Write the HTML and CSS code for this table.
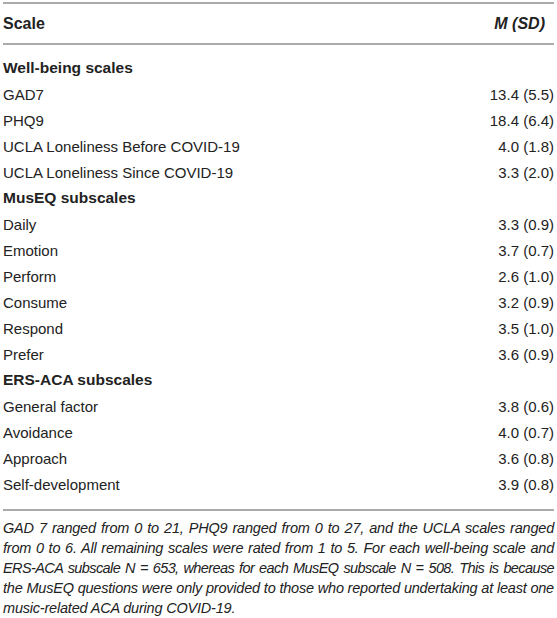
FILE: index.html
```html
<!DOCTYPE html>
<html lang="en">
<head>
<meta charset="utf-8">
<title>Table</title>
<link rel="stylesheet" href="styles.css">
</head>
<body>
<div class="wrap">
  <table class="tbl">
    <thead>
      <tr><th class="c-scale">Scale</th><th class="c-val"><i>M (SD)</i></th></tr>
    </thead>
    <tbody>
      <tr class="sec first"><td colspan="2">Well-being scales</td></tr>
      <tr><td>GAD7</td><td class="num">13.4 (5.5)</td></tr>
      <tr><td>PHQ9</td><td class="num">18.4 (6.4)</td></tr>
      <tr><td>UCLA Loneliness Before COVID-19</td><td class="num">4.0 (1.8)</td></tr>
      <tr><td>UCLA Loneliness Since COVID-19</td><td class="num">3.3 (2.0)</td></tr>
      <tr class="sec"><td colspan="2">MusEQ subscales</td></tr>
      <tr><td>Daily</td><td class="num">3.3 (0.9)</td></tr>
      <tr><td>Emotion</td><td class="num">3.7 (0.7)</td></tr>
      <tr><td>Perform</td><td class="num">2.6 (1.0)</td></tr>
      <tr><td>Consume</td><td class="num">3.2 (0.9)</td></tr>
      <tr><td>Respond</td><td class="num">3.5 (1.0)</td></tr>
      <tr><td>Prefer</td><td class="num">3.6 (0.9)</td></tr>
      <tr class="sec"><td colspan="2">ERS-ACA subscales</td></tr>
      <tr><td>General factor</td><td class="num">3.8 (0.6)</td></tr>
      <tr><td>Avoidance</td><td class="num">4.0 (0.7)</td></tr>
      <tr><td>Approach</td><td class="num">3.6 (0.8)</td></tr>
      <tr class="last"><td>Self-development</td><td class="num">3.9 (0.8)</td></tr>
    </tbody>
  </table>
  <p class="note"><span class="ln">GAD 7 ranged from 0 to 21, PHQ9 ranged from 0 to 27, and the UCLA scales ranged</span><span class="ln">from 0 to 6. All remaining scales were rated from 1 to 5. For each well-being scale and</span><span class="ln tight">ERS-ACA subscale N = 653, whereas for each MusEQ subscale N = 508. This is because</span><span class="ln">the MusEQ questions were only provided to those who reported undertaking at least one</span><span class="end">music-related ACA during COVID-19.</span></p>
</div>
</body>
</html>
```
FILE: styles.css
```css
html, body {
  margin: 0;
  padding: 0;
  background: #ffffff;
}
body {
  font-family: "Liberation Sans", Arial, sans-serif;
  color: #222222;
  font-size: 15px;
}
.wrap {
  padding: 2px 3px 0 3px;
}
.tbl {
  width: 100%;
  border-collapse: collapse;
  border-top: 2px solid #aaaaaa;
  border-bottom: 2px solid #aaaaaa;
}
.tbl th {
  height: 39px;
  padding: 0;
  font-weight: bold;
  font-size: 16px;
  text-align: left;
  border-bottom: 2px solid #aaaaaa;
  vertical-align: middle;
}
.tbl th.c-val {
  text-align: right;
  padding-right: 9px;
}
.tbl td {
  height: 26px;
  padding: 0;
  vertical-align: middle;
}
.tbl td.num {
  text-align: right;
}
.tbl tr.sec td {
  font-weight: bold;
  font-size: 15.5px;
}
.tbl tr.first td {
  height: 26px;
  padding-top: 10px;
}
.tbl tr.last td {
  padding-bottom: 12px;
}
.note {
  margin: 7px 0 0 0;
  font-style: italic;
  line-height: 20px;
  font-size: 14.5px;
  letter-spacing: -0.2px;
}
.note .ln {
  display: block;
  text-align: justify;
  text-align-last: justify;
  white-space: nowrap;
}
.note .ln.tight {
  letter-spacing: -0.6px;
  word-spacing: -2px;
}
.note .end {
  display: block;
}
```
